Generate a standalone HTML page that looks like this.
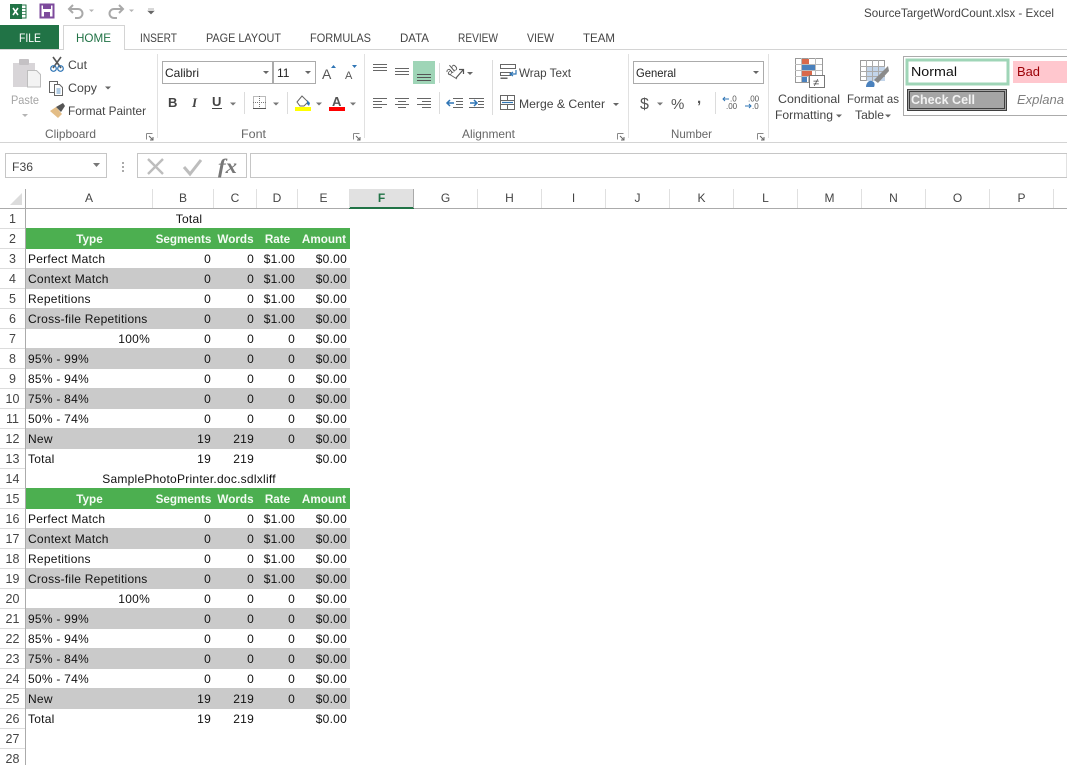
<!DOCTYPE html>
<html><head><meta charset="utf-8"><style>
html,body{margin:0;padding:0;background:#fff;width:1067px;height:765px;overflow:hidden}
body{position:relative;font-family:"Liberation Sans",sans-serif}
svg{position:absolute;left:0;top:0}
svg text{font-family:"Liberation Sans",sans-serif;font-size:12px;fill:#444}
#sheet{position:absolute;left:26px;top:209px;border-collapse:collapse;table-layout:fixed;width:324px;font-size:12px;color:#111;letter-spacing:.25px}
#sheet td{height:20px;padding:0 3px;white-space:nowrap;overflow:visible;text-align:right;line-height:20px;box-sizing:border-box}
#sheet td:first-child{text-align:left;padding-left:2px}
#sheet td.rt{text-align:right!important}
#sheet td.ctr{text-align:center!important}
#sheet tr.g td{background:#cacaca;box-shadow:0 -1px 0 #cacaca}
#sheet tr.h td{background:#4caf50;box-shadow:0 -1px 0 #4caf50;color:#f4fbf4;font-weight:bold;text-align:center;font-size:11.7px;letter-spacing:0;padding:2px 0 0;line-height:18px}
.rn{position:absolute;left:0;width:25px;height:20px;line-height:20px;text-align:center;font-size:12.5px;color:#444;box-sizing:border-box;border-bottom:1px solid #dcdcdc}
.ch{position:absolute;top:189px;height:19px;line-height:19px;text-align:center;font-size:12px;color:#444;box-sizing:border-box;border-right:1px solid #e0e0e0}
</style></head><body>
<svg width="1067" height="765" viewBox="0 0 1067 765">
<!-- title bar -->
<rect x="18" y="5" width="8" height="13" fill="#fff" stroke="#217346"/>
<path d="M18 8.5h8M18 11.5h8M18 14.5h8M21.5 5v13" stroke="#217346" stroke-width=".8"/>
<rect x="10" y="4" width="12" height="15" fill="#217346"/>
<path d="M13 8l5 7M18 8l-5 7" stroke="#fff" stroke-width="1.6"/>
<rect x="40.500" y="4.500" width="13" height="13" fill="#fff" stroke="#7d4a9c" stroke-width="2"/>
<rect x="43" y="4" width="8" height="5" fill="#7d4a9c"/>
<rect x="44" y="12" width="6" height="5" fill="#7d4a9c"/>
<path d="M70 9h8a4.500 4.500 0 0 1 0 9h-3M73 5l-4 4 4 4" fill="none" stroke="#a9a9a9" stroke-width="2"/>
<path d="M122 9h-8a4.500 4.500 0 0 0 0 9h3M119 5l4 4-4 4" fill="none" stroke="#a9a9a9" stroke-width="2"/>
<path d="M89 9.500h5l-2.500 2.500zM129 9.500h5l-2.500 2.500z" fill="#b5b5b5"/>
<path d="M148 9h6M148 11h6l-3 3z" fill="#666" stroke="#666" stroke-width=".6"/>
<text x="864" y="17" style="font-size:12px" textLength="190" lengthAdjust="spacingAndGlyphs">SourceTargetWordCount.xlsx - Excel</text>

<!-- tabs -->
<rect x="0" y="25" width="59" height="25" fill="#217346"/>
<text x="19" y="42" style="fill:#fff" textLength="22" lengthAdjust="spacingAndGlyphs">FILE</text>
<path d="M0 49.500H63.500V25.500H124.500V49.500H1067" fill="#fff" stroke="#d4d4d4"/>
<text x="76" y="42" style="fill:#217346" textLength="35" lengthAdjust="spacingAndGlyphs">HOME</text>
<text x="140" y="42" textLength="37" lengthAdjust="spacingAndGlyphs">INSERT</text>
<text x="206" y="42" textLength="75" lengthAdjust="spacingAndGlyphs">PAGE LAYOUT</text>
<text x="310" y="42" textLength="61" lengthAdjust="spacingAndGlyphs">FORMULAS</text>
<text x="400" y="42" textLength="29" lengthAdjust="spacingAndGlyphs">DATA</text>
<text x="458" y="42" textLength="40" lengthAdjust="spacingAndGlyphs">REVIEW</text>
<text x="527" y="42" textLength="27" lengthAdjust="spacingAndGlyphs">VIEW</text>
<text x="583" y="42" textLength="32" lengthAdjust="spacingAndGlyphs">TEAM</text>

<!-- ribbon frame -->
<path d="M0 142.500H1067" stroke="#d4d4d4"/>
<path d="M157.500 54V138M364.500 54V138M628.500 54V138M768.500 54V138" stroke="#e1e1e1"/>

<!-- clipboard -->
<rect x="13" y="63" width="22" height="24" fill="#d8d5d8"/>
<rect x="19" y="59" width="10" height="6" rx="1" fill="#c4c1c4"/>
<path d="M27.500 70.500h9l4 4v12.500h-13z" fill="#f3f3f3" stroke="#bdbdbd"/>
<text x="11" y="104" style="fill:#a4a4a4" textLength="28" lengthAdjust="spacingAndGlyphs">Paste</text>
<path d="M22 114h6l-3 3z" fill="#b5b5b5"/>
<path d="M53 57l8 11M61 57l-8 11" stroke="#555" stroke-width="1.6"/>
<circle cx="53.500" cy="68.500" r="2.800" fill="none" stroke="#2f75b5" stroke-width="1.200"/>
<circle cx="60.500" cy="68.500" r="2.800" fill="none" stroke="#2f75b5" stroke-width="1.200"/>
<text x="68" y="69" textLength="19" lengthAdjust="spacingAndGlyphs">Cut</text>
<rect x="49.500" y="81.500" width="8" height="11" fill="#fff" stroke="#666"/>
<path d="M54.500 84.500h5l3 3v8h-8z" fill="#fff" stroke="#666"/>
<path d="M56.500 89h4M56.500 91h4M56.500 93h4" stroke="#2f75b5" stroke-width=".8"/>
<text x="68" y="92" textLength="29" lengthAdjust="spacingAndGlyphs">Copy</text>
<path d="M105 86.500h6l-3 3z" fill="#666"/>
<path d="M50 111l6-4 6 7-4 4z" fill="#e3bd86"/>
<path d="M56 107l7-4 2 3-4 6z" fill="#555"/>
<text x="68" y="115" textLength="78" lengthAdjust="spacingAndGlyphs">Format Painter</text>
<text x="45" y="138" style="fill:#666" textLength="51" lengthAdjust="spacingAndGlyphs">Clipboard</text>
<path d="M146.500 133.500h6M146.500 133.500v6" stroke="#888" fill="none"/><path d="M149 136l4 4M150 140h3v-3" stroke="#666" fill="none"/>

<!-- font -->
<rect x="162.500" y="61.500" width="110" height="22" fill="#fff" stroke="#ababab"/>
<rect x="273.500" y="61.500" width="42" height="22" fill="#fff" stroke="#ababab"/>
<text x="165" y="77" style="fill:#222" textLength="34" lengthAdjust="spacingAndGlyphs">Calibri</text>
<text x="277" y="77" style="fill:#222">11</text>
<path d="M263 71h6l-3 3zM305 71h6l-3 3z" fill="#666"/>
<text x="322" y="79" style="font-size:14px;fill:#555">A</text>
<path d="M331 68h5l-2.500-3z" fill="#2f75b5"/>
<text x="345" y="79" style="font-size:11px;fill:#555">A</text>
<path d="M352 65h5l-2.500 3z" fill="#2f75b5"/>
<text x="168" y="107" style="font-weight:bold;font-size:13px;fill:#444">B</text>
<text x="192" y="107" style="font-style:italic;font-size:13px;fill:#444;font-family:'Liberation Serif',serif;font-weight:bold">I</text>
<text x="212" y="106" style="font-weight:bold;font-size:13px;fill:#444">U</text>
<path d="M212 108.500h10" stroke="#444"/>
<path d="M230 102.500h6l-3 3zM273 102.500h6l-3 3zM316 102.500h6l-3 3zM350 102.500h6l-3 3z" fill="#777"/>
<path d="M244.500 92V114M287.500 92V114" stroke="#dcdcdc"/>
<rect x="253.500" y="96.500" width="12" height="12" fill="none" stroke="#777" stroke-dasharray="1 1"/>
<path d="M259.500 96v12M253 102.500h13" stroke="#777" stroke-dasharray="1 1"/>
<path d="M253 108.500h13" stroke="#555"/>
<path d="M297 102l5-6 6 6-4 4h-4z" fill="#fff" stroke="#666"/>
<path d="M307 100l3 3-1 3-2-2z" fill="#2f75b5"/>
<rect x="295" y="107" width="16" height="4" fill="#ffff00"/>
<text x="332" y="106" style="font-weight:bold;font-size:13px;fill:#555">A</text>
<rect x="329" y="107" width="16" height="4" fill="#ff0000"/>
<text x="241" y="138" style="fill:#666" textLength="25" lengthAdjust="spacingAndGlyphs">Font</text>
<path d="M353.500 133.500h6M353.500 133.500v6" stroke="#888" fill="none"/><path d="M356 136l4 4M357 140h3v-3" stroke="#666" fill="none"/>

<!-- alignment -->
<path d="M373 64.500h14M373 67.500h14M373 70.500h14M395 68.500h14M395 71.500h14M395 74.500h14" stroke="#666"/>
<rect x="413" y="61" width="22" height="23" fill="#9fd5b7"/>
<path d="M417 74.500h14M417 77.500h14M417 80.500h14" stroke="#555"/>
<path d="M373 98.500h14M373 101.500h9M373 104.500h14M373 107.500h9M395 98.500h14M398 101.500h8M395 104.500h14M398 107.500h8M417 98.500h14M422 101.500h9M417 104.500h14M422 107.500h9" stroke="#666"/>
<path d="M439.500 63V83M439.500 92V114M492.500 60V115" stroke="#dcdcdc"/>
<text x="449" y="76" transform="rotate(-40 449 76)" style="font-size:11px;fill:#555">ab</text>
<path d="M449 74l8 5" fill="none" stroke="#666"/>
<path d="M456 78l7-8M459 69.500h4.500v4.500" fill="none" stroke="#555" stroke-width="1.200"/>
<path d="M467 72h6l-3 3z" fill="#666"/>
<path d="M453 98.500h10M456 101.500h7M456 104.500h7M453 107.500h10M469 98.500h15M478 101.500h6M478 104.500h6M469 107.500h15" stroke="#666"/>
<path d="M447 103h7M450 100l-3 3 3 3M470 103h7M474 100l3 3-3 3" fill="none" stroke="#2f75b5" stroke-width="1.500"/>
<rect x="500.500" y="64.500" width="15" height="4" fill="none" stroke="#666"/>
<rect x="500.500" y="72.500" width="10" height="3" fill="none" stroke="#666"/>
<rect x="500.500" y="77.500" width="7" height="1.500" fill="#666"/>
<path d="M510 74h6v-4M513 72l-3 2 3 2" fill="none" stroke="#2f75b5" stroke-width="1.200"/>
<text x="519" y="77" textLength="52" lengthAdjust="spacingAndGlyphs">Wrap Text</text>
<rect x="500.500" y="95.500" width="14" height="14" fill="none" stroke="#666"/>
<path d="M500 100.500h15M500 104.500h15M507.500 95v5M507.500 105v5" stroke="#666"/>
<path d="M502 102.500h11" stroke="#2f75b5" stroke-width="1.200"/>
<text x="519" y="108" textLength="86" lengthAdjust="spacingAndGlyphs">Merge &amp; Center</text>
<path d="M613 103h6l-3 3z" fill="#666"/>
<text x="462" y="138" style="fill:#666" textLength="53" lengthAdjust="spacingAndGlyphs">Alignment</text>
<path d="M617.500 133.500h6M617.500 133.500v6" stroke="#888" fill="none"/><path d="M620 136l4 4M621 140h3v-3" stroke="#666" fill="none"/>

<!-- number -->
<rect x="633.500" y="61.500" width="130" height="22" fill="#fff" stroke="#ababab"/>
<text x="636" y="77" style="fill:#222" textLength="40" lengthAdjust="spacingAndGlyphs">General</text>
<path d="M753 71h6l-3 3z" fill="#666"/>
<text x="640" y="109" style="font-size:16px;fill:#555">$</text>
<path d="M657 102.500h6l-3 3z" fill="#777"/>
<text x="671" y="109" style="font-size:15px;fill:#555">%</text>
<text x="697" y="103" style="font-size:15px;font-weight:bold;fill:#555">,</text>
<path d="M715.500 92V114" stroke="#dcdcdc"/>
<text x="730" y="101.500" style="font-size:8px;fill:#555">.0</text>
<text x="726" y="109" style="font-size:8px;fill:#555">.00</text>
<path d="M723 99h6M725 97l-2 2 2 2" fill="none" stroke="#2f75b5"/>
<text x="748" y="101.500" style="font-size:8px;fill:#555">.00</text>
<text x="752" y="109" style="font-size:8px;fill:#555">.0</text>
<path d="M745 106h6M749 104l2 2-2 2" fill="none" stroke="#2f75b5"/>
<text x="671" y="138" style="fill:#666" textLength="41" lengthAdjust="spacingAndGlyphs">Number</text>
<path d="M757.500 133.500h6M757.500 133.500v6" stroke="#888" fill="none"/><path d="M760 136l4 4M761 140h3v-3" stroke="#666" fill="none"/>

<!-- conditional -->
<rect x="795.500" y="58.500" width="27" height="24" fill="#fff" stroke="#999"/>
<path d="M801.500 58v24M808.500 58v24M815.500 58v24M795 64.500h27M795 70.500h27M795 76.500h27" stroke="#bbb"/>
<rect x="802" y="59" width="7" height="5" fill="#d9694a"/>
<rect x="802" y="65" width="13" height="5" fill="#4a81bd"/>
<rect x="802" y="71" width="10" height="5" fill="#d9694a"/>
<rect x="802" y="77" width="5" height="5" fill="#4a81bd"/>
<rect x="809.500" y="75.500" width="15" height="12" fill="#fff" stroke="#777"/>
<text x="813" y="86" style="font-size:11px;fill:#444">≠</text>
<text x="778" y="103" textLength="62" lengthAdjust="spacingAndGlyphs">Conditional</text>
<text x="775" y="119" textLength="58" lengthAdjust="spacingAndGlyphs">Formatting</text>
<path d="M836 114.500h6l-3 3z" fill="#666"/>
<rect x="860.500" y="60.500" width="24" height="20" fill="#fff" stroke="#999"/>
<rect x="867" y="67" width="18" height="14" fill="#c3d5ea"/>
<path d="M866.500 60v21M872.500 60v21M878.500 60v21M860 66.500h25M860 71.500h25M860 76.500h25" stroke="#aaa"/>
<path d="M866 87c0-4 3-7 6-6s3 4 2 6z" fill="#4a81bd"/>
<path d="M874 80l14-14 1 5-11 12z" fill="#8a8a8a"/>
<text x="847" y="103" textLength="52" lengthAdjust="spacingAndGlyphs">Format as</text>
<text x="855" y="119" textLength="29" lengthAdjust="spacingAndGlyphs">Table</text>
<path d="M885 114.500h6l-3 3z" fill="#666"/>

<!-- styles -->
<path d="M1067 56.500H903.500V115.500H1067" fill="#fff" stroke="#ababab"/>
<rect x="907" y="60" width="101" height="24" fill="#fff" stroke="#9fd5b7" stroke-width="3"/>
<text x="911" y="76" style="font-size:13px;fill:#111" textLength="46" lengthAdjust="spacingAndGlyphs">Normal</text>
<rect x="1013" y="61" width="54" height="22" fill="#ffc7ce"/>
<text x="1017" y="76" style="font-size:13px;fill:#9c0006" textLength="23" lengthAdjust="spacingAndGlyphs">Bad</text>
<rect x="907.500" y="89.500" width="99" height="21" fill="#a5a5a5" stroke="#3f3f3f"/>
<rect x="909.500" y="91.500" width="95" height="17" fill="none" stroke="#3f3f3f"/>
<text x="911" y="104" style="font-size:13px;font-weight:bold;fill:#f2f2f2" textLength="64" lengthAdjust="spacingAndGlyphs">Check Cell</text>
<text x="1017" y="104" style="font-size:13px;font-style:italic;fill:#7f7f7f">Explana</text>

<!-- formula bar -->
<rect x="5.500" y="153.500" width="101" height="24" fill="#fff" stroke="#c6c6c6"/>
<text x="12" y="171" style="fill:#444" textLength="21" lengthAdjust="spacingAndGlyphs">F36</text>
<path d="M93 163h7l-3.500 4z" fill="#777"/>
<path d="M122 163h2v2h-2zM122 167h2v2h-2zM122 171h2v2h-2z" fill="#aaa" transform="translate(0,-1)"/>
<rect x="137.500" y="153.500" width="109" height="24" fill="#fff" stroke="#c6c6c6"/>
<path d="M148 159l15 15M163 159l-15 15" stroke="#bdbdbd" stroke-width="2.400"/>
<path d="M184 167l6 7 11-14" fill="none" stroke="#bdbdbd" stroke-width="3"/>
<text x="218" y="173" style="font-family:'Liberation Serif',serif;font-style:italic;font-weight:bold;font-size:21px;fill:#777" textLength="19" lengthAdjust="spacingAndGlyphs">fx</text>
<path d="M250.500 153.500H1067V177.500H250.500z" fill="#fff" stroke="#c6c6c6"/>

<!-- sheet headers -->
<path d="M22 193v12h-12z" fill="#dcdcdc"/>
<rect x="350" y="189" width="64" height="19" fill="#e1e1e1"/>
<path d="M0 208.500H1067" stroke="#ababab"/>
<rect x="349" y="207" width="65" height="2" fill="#217346"/>
<path d="M25.500 189V765" stroke="#ababab"/>
</svg>

<div class="ch" style="left:26px;width:127px">A</div>
<div class="ch" style="left:153px;width:61px">B</div>
<div class="ch" style="left:214px;width:43px">C</div>
<div class="ch" style="left:257px;width:41px">D</div>
<div class="ch" style="left:298px;width:52px">E</div>
<div class="ch" style="left:350px;width:64px;font-weight:bold;color:#217346;border-right:1px solid #aaa">F</div>
<div class="ch" style="left:414px;width:64px">G</div>
<div class="ch" style="left:478px;width:64px">H</div>
<div class="ch" style="left:542px;width:64px">I</div>
<div class="ch" style="left:606px;width:64px">J</div>
<div class="ch" style="left:670px;width:64px">K</div>
<div class="ch" style="left:734px;width:64px">L</div>
<div class="ch" style="left:798px;width:64px">M</div>
<div class="ch" style="left:862px;width:64px">N</div>
<div class="ch" style="left:926px;width:64px">O</div>
<div class="ch" style="left:990px;width:64px">P</div>

<div class="rn" style="top:209px">1</div><div class="rn" style="top:229px">2</div><div class="rn" style="top:249px">3</div><div class="rn" style="top:269px">4</div><div class="rn" style="top:289px">5</div><div class="rn" style="top:309px">6</div><div class="rn" style="top:329px">7</div><div class="rn" style="top:349px">8</div><div class="rn" style="top:369px">9</div><div class="rn" style="top:389px">10</div><div class="rn" style="top:409px">11</div><div class="rn" style="top:429px">12</div><div class="rn" style="top:449px">13</div><div class="rn" style="top:469px">14</div><div class="rn" style="top:489px">15</div><div class="rn" style="top:509px">16</div><div class="rn" style="top:529px">17</div><div class="rn" style="top:549px">18</div><div class="rn" style="top:569px">19</div><div class="rn" style="top:589px">20</div><div class="rn" style="top:609px">21</div><div class="rn" style="top:629px">22</div><div class="rn" style="top:649px">23</div><div class="rn" style="top:669px">24</div><div class="rn" style="top:689px">25</div><div class="rn" style="top:709px">26</div><div class="rn" style="top:729px">27</div><div class="rn" style="top:749px">28</div>

<table id="sheet"><colgroup><col style="width:127px"><col style="width:61px"><col style="width:43px"><col style="width:41px"><col style="width:52px"></colgroup>
<tr><td colspan="5" class="ctr" style="padding-right:0">Total</td></tr>
<tr class="h"><td>Type</td><td>Segments</td><td>Words</td><td>Rate</td><td>Amount</td></tr>
<tr><td>Perfect Match</td><td>0</td><td>0</td><td>$1.00</td><td>$0.00</td></tr>
<tr class="g"><td>Context Match</td><td>0</td><td>0</td><td>$1.00</td><td>$0.00</td></tr>
<tr><td>Repetitions</td><td>0</td><td>0</td><td>$1.00</td><td>$0.00</td></tr>
<tr class="g"><td>Cross-file Repetitions</td><td>0</td><td>0</td><td>$1.00</td><td>$0.00</td></tr>
<tr><td class="rt">100%</td><td>0</td><td>0</td><td>0</td><td>$0.00</td></tr>
<tr class="g"><td>95% - 99%</td><td>0</td><td>0</td><td>0</td><td>$0.00</td></tr>
<tr><td>85% - 94%</td><td>0</td><td>0</td><td>0</td><td>$0.00</td></tr>
<tr class="g"><td>75% - 84%</td><td>0</td><td>0</td><td>0</td><td>$0.00</td></tr>
<tr><td>50% - 74%</td><td>0</td><td>0</td><td>0</td><td>$0.00</td></tr>
<tr class="g"><td>New</td><td>19</td><td>219</td><td>0</td><td>$0.00</td></tr>
<tr><td>Total</td><td>19</td><td>219</td><td></td><td>$0.00</td></tr>
<tr><td colspan="5" class="ctr" style="padding-right:0">SamplePhotoPrinter.doc.sdlxliff</td></tr>
<tr class="h"><td>Type</td><td>Segments</td><td>Words</td><td>Rate</td><td>Amount</td></tr>
<tr><td>Perfect Match</td><td>0</td><td>0</td><td>$1.00</td><td>$0.00</td></tr>
<tr class="g"><td>Context Match</td><td>0</td><td>0</td><td>$1.00</td><td>$0.00</td></tr>
<tr><td>Repetitions</td><td>0</td><td>0</td><td>$1.00</td><td>$0.00</td></tr>
<tr class="g"><td>Cross-file Repetitions</td><td>0</td><td>0</td><td>$1.00</td><td>$0.00</td></tr>
<tr><td class="rt">100%</td><td>0</td><td>0</td><td>0</td><td>$0.00</td></tr>
<tr class="g"><td>95% - 99%</td><td>0</td><td>0</td><td>0</td><td>$0.00</td></tr>
<tr><td>85% - 94%</td><td>0</td><td>0</td><td>0</td><td>$0.00</td></tr>
<tr class="g"><td>75% - 84%</td><td>0</td><td>0</td><td>0</td><td>$0.00</td></tr>
<tr><td>50% - 74%</td><td>0</td><td>0</td><td>0</td><td>$0.00</td></tr>
<tr class="g"><td>New</td><td>19</td><td>219</td><td>0</td><td>$0.00</td></tr>
<tr><td>Total</td><td>19</td><td>219</td><td></td><td>$0.00</td></tr>
</table>
</body></html>
